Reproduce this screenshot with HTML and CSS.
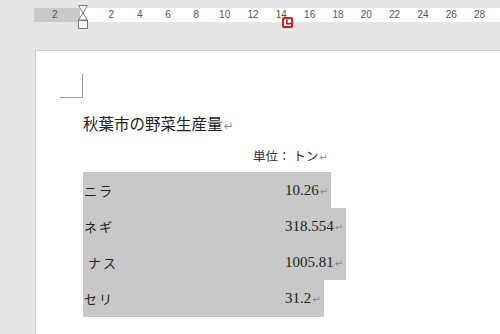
FILE: index.html
```html
<!DOCTYPE html>
<html lang="ja">
<head>
<meta charset="utf-8">
<link rel="stylesheet" href="styles.css">
</head>
<body>
<div class="ruler">
  <div class="ruler-margin"><span class="tick">2</span></div>
  <div class="ruler-body">
    <span class="tick">2</span><span class="tick">4</span><span class="tick">6</span><span class="tick">8</span><span class="tick">10</span><span class="tick">12</span><span class="tick">14</span><span class="tick">16</span><span class="tick">18</span><span class="tick">20</span><span class="tick">22</span><span class="tick">24</span><span class="tick">26</span><span class="tick">28</span>
  </div>
  <svg class="indent" width="12" height="25" viewBox="0 0 12 25">
    <path d="M1.5 0.5 H10.5 L6 8 Z" fill="#fff" stroke="#7a7a7a"/>
    <path d="M6 8 L10.5 15 H1.5 Z" fill="#fff" stroke="#7a7a7a"/>
    <rect x="1.5" y="15.5" width="9" height="8" fill="#fff" stroke="#7a7a7a"/>
  </svg>
  <div class="tabmark">
    <svg width="6" height="6" viewBox="0 0 6 6"><path d="M1 0 V5 H6" fill="none" stroke="#505050" stroke-width="2"/></svg>
  </div>
</div>
<div class="page">
  <div class="corner"></div>
  <p class="title">秋葉市の野菜生産量<span class="ret big">↵</span></p>
  <p class="unit">単位： トン<span class="ret">↵</span></p>
  <div class="rows">
    <div class="row"><span class="label">ニラ</span><span class="num">10.26</span><span class="ret">↵</span></div>
    <div class="row"><span class="label">ネギ</span><span class="num">318.554</span><span class="ret">↵</span></div>
    <div class="row"><span class="label indented">ナス</span><span class="num">1005.81</span><span class="ret">↵</span></div>
    <div class="row"><span class="label">セリ</span><span class="num">31.2</span><span class="ret">↵</span></div>
  </div>
</div>
</body>
</html>
```
FILE: styles.css
```css
html, body {
  margin: 0;
  padding: 0;
}
body {
  width: 500px;
  height: 334px;
  overflow: hidden;
  background: #e6e6e6;
  font-family: "Liberation Serif", "Noto Sans CJK JP", serif;
  position: relative;
}
.ruler {
  position: relative;
  display: flex;
  height: 14px;
  margin-top: 8px;
  margin-left: 34px;
}
.ruler-margin {
  width: 46px;
  background: #c8c8c8;
  display: flex;
}
.ruler-margin .tick {
  margin-left: 6.5px;
}
.ruler-body {
  flex: 1;
  background: #fff;
  display: flex;
  padding-left: 17.2px;
}
.tick {
  width: 28.33px;
  flex: none;
  text-align: center;
  font-family: "Liberation Sans", Arial, sans-serif;
  font-size: 10px;
  line-height: 14px;
  color: #555;
}
.indent {
  position: absolute;
  left: 43px;
  top: -3px;
}
.tabmark {
  position: absolute;
  left: 248px;
  top: 9px;
  width: 5px;
  height: 7px;
  border: 2px solid #ee1111;
  border-radius: 2px;
  background: #fff;
  display: flex;
  align-items: flex-end;
  padding: 0 0 0 2px;
}
.tabmark svg {
  display: block;
  margin-bottom: 1px;
}
.page {
  position: absolute;
  left: 35px;
  top: 50px;
  right: 0;
  bottom: 0;
  background: #fff;
  border-left: 1px solid #cfcfcf;
  border-top: 1px solid #cfcfcf;
  padding-left: 47px;
}
.corner {
  width: 23px;
  height: 24px;
  margin-left: -23px;
  margin-top: 23px;
  border-right: 1px solid #9a9a9a;
  border-bottom: 1px solid #9a9a9a;
  box-sizing: border-box;
}
.title {
  margin: 15px 0 0;
  font-size: 15.5px;
  line-height: 20px;
  color: #222;
  font-family: "Noto Sans CJK JP", sans-serif;
  font-weight: 400;
}
.unit {
  margin: 12px 0 0 170px;
  font-size: 12.5px;
  line-height: 16px;
  color: #333;
  font-family: "Noto Sans CJK JP", sans-serif;
}
.ret {
  font-family: "DejaVu Sans", sans-serif;
  font-size: 10px;
  color: #8a8a8a;
  margin-left: 1px;
}
.ret.big {
  font-size: 12px;
}
.rows {
  margin-top: 6px;
  display: flex;
  flex-direction: column;
  align-items: flex-start;
}
.row {
  display: flex;
  align-items: center;
  height: 36px;
  background: #c8c8c8;
  padding-right: 3px;
}
.row:last-child {
  height: 37px;
}
.label {
  width: 202px;
  font-family: "Noto Sans CJK JP", sans-serif;
  font-size: 13px;
  color: #222;
  letter-spacing: 2px;
  padding-left: 1px;
  box-sizing: border-box;
}
.label.indented {
  padding-left: 5px;
}
.num {
  font-size: 15px;
  color: #222;
}
.num + .ret {
  margin-top: 2px;
}
```
